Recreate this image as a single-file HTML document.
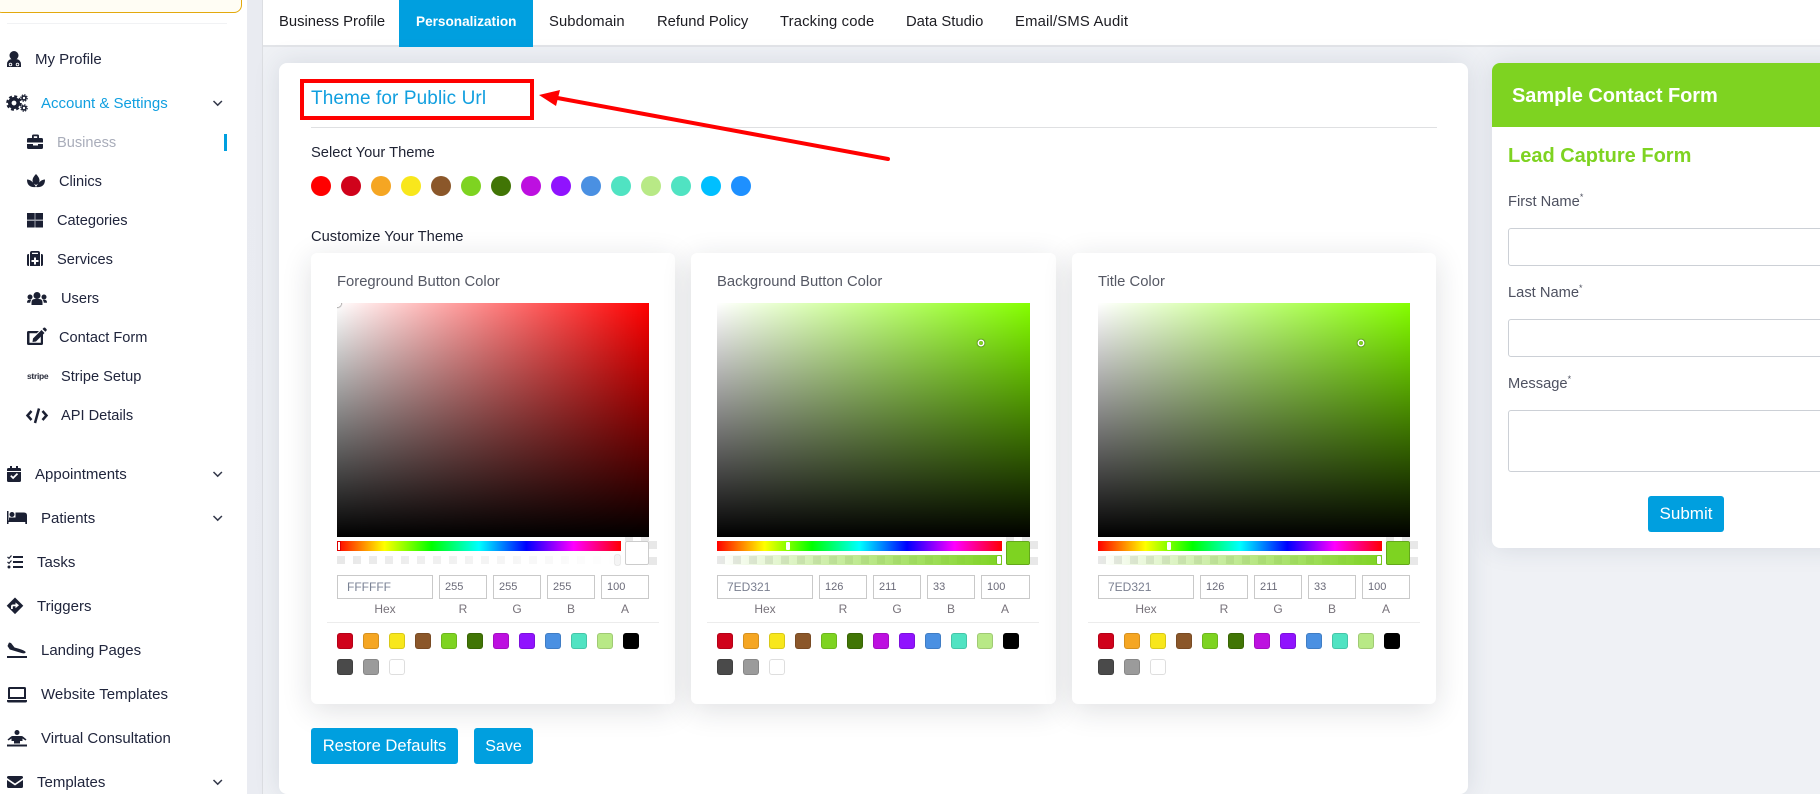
<!DOCTYPE html>
<html lang="en">
<head>
<meta charset="utf-8">
<title>Personalization</title>
<style>
*{box-sizing:border-box}
html,body{margin:0;padding:0;width:1820px;height:794px;overflow:hidden;background:#fff}
body{position:relative;font-family:"Liberation Sans",sans-serif;color:#1f2438}
.a{position:absolute}
.t{position:absolute;white-space:nowrap;line-height:20px}
#side{position:absolute;left:0;top:0;width:247px;height:794px;background:#fff}
#gap{position:absolute;left:247px;top:0;width:16px;height:794px;background:linear-gradient(#e9ebf1,#eaecf2);border-right:1px solid #dcdee2}
#tabs{position:absolute;left:263px;top:0;width:1557px;height:47px;background:#fff;border-bottom:2px solid #e2e4e8}
#content{position:absolute;left:263px;top:47px;width:1557px;height:747px;background:#eff1f5}
.m{font-size:15px;color:#20253c}
.s{font-size:14.600px;color:#20253c}
.tab{position:absolute;top:12px;font-size:14.800px;line-height:20px;color:#1c1c22;white-space:nowrap}
.panel{position:absolute;background:#fff;border-radius:8px;box-shadow:0 0 26px rgba(45,60,90,.13)}
.card{position:absolute;top:253px;height:451px;width:365px;background:#fff;border-radius:6px;box-shadow:0 6px 30px rgba(30,35,50,.14)}
.sat{position:absolute;left:26px;top:50px;width:313px;height:234px;overflow:hidden}
.sat i{position:absolute;inset:0;display:block}
.hue{position:absolute;left:26px;top:288px;width:285px;height:10px;background:linear-gradient(90deg,#f00 0%,#ff0 16.67%,#0f0 33.33%,#0ff 50%,#00f 66.67%,#f0f 83.33%,#f00 100%)}
.alp{position:absolute;left:26px;top:302px;width:285px;height:10px;background-color:#fff;background-image:linear-gradient(90deg,#e8e8e8 50%,#fff 50%);background-size:16px 8px;background-position:0 1px;background-repeat:repeat-x}
.alp i{position:absolute;inset:0;display:block}
.chk{position:absolute;left:314px;top:284px;width:32px;height:28px;background-image:conic-gradient(#fff 25%,#e8e8e8 0 50%,#fff 0 75%,#e8e8e8 0);background-size:16px 16px;background-position:0 -4px}
.sw{position:absolute;left:314px;top:288px;width:24px;height:24px;border-radius:2px;box-shadow:inset 0 0 0 1px rgba(0,0,0,.2)}
.h{position:absolute;width:4px;background:#fff;border-radius:1px}
.dot{position:absolute;width:4px;height:4px;border-radius:50%;box-shadow:0 0 0 1.500px #fff,0 0 1px 2px rgba(0,0,0,.5)}
.in{position:absolute;top:322px;height:24px;border:1px solid #c9c9c9;font-size:11px;line-height:22px;color:#6a6a78;padding-left:5px;background:#fff}
.lb{position:absolute;top:349px;font-size:12px;line-height:14px;color:#77727a;text-align:center}
.dv{position:absolute;left:16px;top:369px;width:332px;height:1px;background:#ececec}
.c{position:absolute;width:16px;height:16px;border-radius:3px;box-shadow:inset 0 0 0 1px rgba(0,0,0,.13)}
.cl{position:absolute;font-size:14.800px;line-height:20px;color:#555864;left:26px;top:19px;white-space:nowrap}
.tc{position:absolute;top:176px;width:20px;height:20px;border-radius:50%}
.fi{position:absolute;left:1508px;width:320px;border:1px solid #ccd0d6;border-radius:3px;background:#fff}
.fl{position:absolute;left:1508px;font-size:14.700px;line-height:20px;color:#4e5160;white-space:nowrap}
.fl sup{font-size:9px;line-height:0}
.btn{position:absolute;background:#009fdf;color:#fff;border-radius:3px;text-align:center;font-size:16.600px;line-height:36px;height:36px;white-space:nowrap}
</style>
</head>
<body>

<div id="side">
  <div class="a" style="left:-6px;top:-12px;width:248px;height:25px;background:#fffdf4;border:1px solid #e3a90c;border-radius:8px"></div>
  <div class="a" style="left:7px;top:23px;width:220px;height:1px;background:#f1f2f4"></div>

  <div class="t m" style="left:35px;top:50px">My Profile</div>
  <div class="t m" style="left:41px;top:94px;color:#109fe0">Account &amp; Settings</div>
  <div class="t s" style="left:57px;top:133px;color:#a9adba">Business</div>
  <div class="a" style="left:224px;top:134px;width:3px;height:17px;background:#009fdf"></div>
  <div class="t s" style="left:59px;top:172px">Clinics</div>
  <div class="t s" style="left:57px;top:211px">Categories</div>
  <div class="t s" style="left:57px;top:250px">Services</div>
  <div class="t s" style="left:61px;top:289px">Users</div>
  <div class="t s" style="left:59px;top:328px">Contact Form</div>
  <div class="t s" style="left:61px;top:367px">Stripe Setup</div>
  <div class="t s" style="left:61px;top:406px">API Details</div>
  <div class="t m" style="left:35px;top:465px">Appointments</div>
  <div class="t m" style="left:41px;top:509px">Patients</div>
  <div class="t m" style="left:37px;top:553px">Tasks</div>
  <div class="t m" style="left:37px;top:597px">Triggers</div>
  <div class="t m" style="left:41px;top:641px">Landing Pages</div>
  <div class="t m" style="left:41px;top:685px;letter-spacing:.05px">Website Templates</div>
  <div class="t m" style="left:41px;top:729px">Virtual Consultation</div>
  <div class="t m" style="left:37px;top:773px">Templates</div>
  <div class="t" style="left:27px;top:366px;font-size:8.500px;font-weight:700;letter-spacing:-.3px;color:#2a2d3c">stripe</div>

  <svg class="a" style="left:0;top:0" width="247" height="794" viewBox="0 0 247 794">
    <g fill="#1b2033">
      <!-- user-md -->
      <circle cx="14" cy="55.500" r="4.500"/>
      <path d="M7 67v-2.500q0-5 5-5.500h4q5 .5 5 5.500V67z"/>
      <circle cx="10.500" cy="64.500" r="1.300" fill="none" stroke="#fff" stroke-width=".9"/>
      <circle cx="17.500" cy="64.500" r="1.300" fill="none" stroke="#fff" stroke-width=".9"/>
      <!-- gears -->
      <circle cx="14" cy="103" r="4.200" fill="none" stroke="#1b2033" stroke-width="3.600"/>
      <circle cx="14" cy="103" r="6.800" fill="none" stroke="#1b2033" stroke-width="2" stroke-dasharray="3 2.340"/>
      <circle cx="24" cy="98" r="2" fill="none" stroke="#1b2033" stroke-width="1.600"/>
      <circle cx="24" cy="98" r="3.300" fill="none" stroke="#1b2033" stroke-width="1" stroke-dasharray="1.500 1.100"/>
      <circle cx="24" cy="108" r="2" fill="none" stroke="#1b2033" stroke-width="1.600"/>
      <circle cx="24" cy="108" r="3.300" fill="none" stroke="#1b2033" stroke-width="1" stroke-dasharray="1.500 1.100"/>
      <!-- briefcase -->
      <path d="M32 138v-2a1.500 1.500 0 0 1 1.500-1.500h4a1.500 1.500 0 0 1 1.500 1.500v2h2.500a1.500 1.500 0 0 1 1.500 1.500v3H27v-3a1.500 1.500 0 0 1 1.500-1.500zM33.800 136.300V138h3.400v-1.700zM27 144h6v1.500h5V144h5v3.500a1.500 1.500 0 0 1-1.500 1.500h-13a1.500 1.500 0 0 1-1.500-1.500z"/>
      <!-- spa -->
      <path d="M36 174q3.500 3.500 3.500 6.500t-3.500 4.500q-3.500-1.500-3.500-4.500T36 174zM27 179.500q5 0 9 7.500q-9 1-9-7.500zM45 179.500q-5 0-9 7.500q9 1 9-7.500z"/>
      <!-- th-large -->
      <rect x="27" y="213" width="16" height="14.500" fill="#9fa2ab"/>
      <rect x="27" y="213" width="7.500" height="6.500"/><rect x="35.500" y="213" width="7.500" height="6.500"/>
      <rect x="27" y="221" width="7.500" height="6.500"/><rect x="35.500" y="221" width="7.500" height="6.500"/>
      <!-- medkit -->
      <path d="M27 255.500q0-1.500 1.500-1.500h.5v12h-.5q-1.500 0-1.500-1.500zM41 254h.5q1.500 0 1.500 1.500v9q0 1.500-1.500 1.500H41z"/>
      <path fill-rule="evenodd" d="M30 266V253q0-2 2-2h6q2 0 2 2v13zM32 254h6v-1.200h-6zM34 257.500v2.500h-2.500v2H34v2.500h2V262h2.500v-2H36v-2.500z"/>
      <!-- users -->
      <circle cx="37" cy="295.500" r="3.500"/><circle cx="30" cy="297" r="2.500"/><circle cx="44" cy="297" r="2.500"/>
      <path d="M31.500 305v-2.500q0-3.500 3.500-3.500h4q3.500 0 3.500 3.500V305zM27 302.500q0-2.800 2.300-2.800h2.200q-1.200 1-1.300 3H27zM47 302.500q0-2.800-2.300-2.800h-2.200q1.200 1 1.300 3H47z"/>
      <!-- edit -->
      <path d="M28.500 331h10.500l-2.200 2.200H29.500v9.600h11.300v-6.600l2.200-2.200v9.500q0 1.500-1.500 1.500H28.500q-1.500 0-1.500-1.500v-11q0-1.500 1.500-1.500z"/>
      <path d="M33 338.500l8.500-8.500 3 3-8.500 8.500-3.500.5zM42.500 329l1.200-1.200q.8-.7 1.500 0l1.300 1.300q.7.700 0 1.500l-1.200 1.200z"/>
      <!-- code -->
      <path d="M31.500 411l-4 4.500 4 4.500M42.500 411l4 4.500-4 4.500M39 408.500l-4 14.500" fill="none" stroke="#1b2033" stroke-width="2.500"/>
      <!-- calendar -->
      <path fill-rule="evenodd" d="M10 466h2v2h4v-2h2v2h1.500q1.500 0 1.500 1.500V471H7v-1.500Q7 468 8.500 468H10zM7 472h14v8.500q0 1.500-1.500 1.500h-11Q7 482 7 480.500zM10.200 476.300l2.900 2.900 5-5-1.200-1.200-3.800 3.800-1.700-1.700z"/>
      <!-- bed -->
      <path d="M7 511h1.500v9.500H27V524h-1.700v-2H8.500v2H7z"/>
      <circle cx="12" cy="514.500" r="2.500"/>
      <path d="M15.500 512.500H24q3 0 3 3v5H15.500z"/>
      <path d="M9 517.500h6.500v3H9z"/>
      <!-- tasks -->
      <path d="M13 556h10v2H13zM13 561h10v2H13zM13 566h10v2H13z"/>
      <path d="M7.500 557l1.500 1.300 2.500-2.800M7.500 562l1.500 1.300 2.500-2.800" fill="none" stroke="#1b2033" stroke-width="1.200"/>
      <circle cx="9" cy="567" r="1.500"/>
      <!-- directions -->
      <path fill-rule="evenodd" d="M15 597.500l8.300 8.300-8.300 8.300-8.300-8.300zM15.500 602.500v2h-2.500q-2 0-2 2v2.500h1.800v-2.500q0-.2.200-.2h2.500v2l3.500-3z"/>
      <!-- plane-arrival -->
      <path d="M7 656h20v2H7zM9 642.500l2 .5 3.500 4.500 4.500 1.200q5 1.400 6.500 3 .5 1-1 1.500-1 .3-3-.2L9.800 649.500 7.500 646z"/>
      <!-- laptop -->
      <path fill-rule="evenodd" d="M9.500 687h15q1.500 0 1.500 1.500V699H8v-10.500Q8 687 9.500 687zM10 689v8h14v-8zM7 700h20v1q0 1.500-1.500 1.500h-17Q7 702.500 7 701z"/>
      <!-- consultation -->
      <circle cx="17" cy="732.500" r="2.500"/>
      <path d="M12.500 736h9q1 0 2 1l3 2.500-1 1-3-2v2.500h-11v-2.500l-3 2-1-1 3-2.500q1-1 2-1z"/>
      <path d="M7 744.500h20v2H7z"/>
      <path d="M14 741h6v2.500h-6z"/>
      <!-- envelope -->
      <path d="M8.500 776h13q1.500 0 1.500 1.500v.5l-8 5.500L7 778v-.5Q7 776 8.500 776zM7 780l8 5.500 8-5.500v6.500q0 1.500-1.500 1.500h-13Q7 788 7 786.500z"/>
    </g>
    <g fill="none" stroke="#33384a" stroke-width="1.500">
      <path d="M213.500 101l4.200 4.200 4.200-4.200"/>
      <path d="M213.500 472l4.200 4.200 4.200-4.200"/>
      <path d="M213.500 516l4.200 4.200 4.200-4.200"/>
      <path d="M213.500 780l4.200 4.200 4.200-4.200"/>
    </g>
  </svg>
</div>

<div id="gap"></div>
<div id="content"></div>

<div id="tabs"></div>
<div class="a" style="left:399px;top:0;width:134px;height:47px;background:#009fdf"></div>
<div class="tab" style="left:279px">Business Profile</div>
<div class="tab" style="left:416px;color:#fff;font-weight:700;font-size:13.600px">Personalization</div>
<div class="tab" style="left:549px;letter-spacing:.1px">Subdomain</div>
<div class="tab" style="left:657px">Refund Policy</div>
<div class="tab" style="left:780px;letter-spacing:.15px">Tracking code</div>
<div class="tab" style="left:906px">Data Studio</div>
<div class="tab" style="left:1015px;letter-spacing:.2px">Email/SMS Audit</div>

<div class="panel" style="left:279px;top:63px;width:1189px;height:731px"></div>
<div class="t" style="left:311px;top:88px;font-size:19px;line-height:22px;color:#119fdf;letter-spacing:.1px">Theme for Public Url</div>
<div class="a" style="left:311px;top:127px;width:1126px;height:1px;background:#dfe0e2"></div>
<div class="t" style="left:311px;top:143px;font-size:14.700px;color:#1e2233">Select Your Theme</div>

<div class="tc" style="left:311px;background:#ff0000"></div>
<div class="tc" style="left:341px;background:#d0021b"></div>
<div class="tc" style="left:371px;background:#f5a623"></div>
<div class="tc" style="left:401px;background:#f8e71c"></div>
<div class="tc" style="left:431px;background:#8b572a"></div>
<div class="tc" style="left:461px;background:#7ed321"></div>
<div class="tc" style="left:491px;background:#417505"></div>
<div class="tc" style="left:521px;background:#bd10e0"></div>
<div class="tc" style="left:551px;background:#9013fe"></div>
<div class="tc" style="left:581px;background:#4a90e2"></div>
<div class="tc" style="left:611px;background:#50e3c2"></div>
<div class="tc" style="left:641px;background:#b8e986"></div>
<div class="tc" style="left:671px;background:#50e3c2"></div>
<div class="tc" style="left:701px;background:#00bfff"></div>
<div class="tc" style="left:731px;background:#1e90ff"></div>

<div class="t" style="left:311px;top:227px;font-size:14.700px;color:#1e2233">Customize Your Theme</div>

<!-- Card 1 -->
<div class="card" style="left:311px;width:364px">
  <div class="cl">Foreground Button Color</div>
  <div class="sat" style="background:#f00;width:312px">
    <i style="background:linear-gradient(90deg,#fff,rgba(255,255,255,0))"></i>
    <i style="background:linear-gradient(0deg,#000,rgba(0,0,0,0))"></i>
    <i style="left:-3px;top:-3px;right:auto;bottom:auto;width:7px;height:7px;border-radius:50%;border:1.500px solid #fff;box-shadow:0 0 1px 1px rgba(0,0,0,.35)"></i>
  </div>
  <div class="hue" style="width:284px"></div>
  <div class="h" style="left:26px;top:288px;height:10px;border:1px solid #d00;width:4px"></div>
  <div class="alp" style="width:284px"><i style="background:linear-gradient(90deg,rgba(255,255,255,0),#fff)"></i></div>
  <div class="h" style="left:304px;top:302px;height:10px;width:5px;background:#f4f4f4;box-shadow:0 0 1px rgba(0,0,0,.5)"></div>
  <div class="chk"></div>
  <div class="sw" style="background:#fff"></div>
  <div class="in" style="left:26px;width:96px;padding-left:9px;color:#7a8294;font-size:12px">FFFFFF</div>
  <div class="in" style="left:128px;width:48px">255</div>
  <div class="in" style="left:182px;width:48px">255</div>
  <div class="in" style="left:236px;width:48px">255</div>
  <div class="in" style="left:290px;width:48px">100</div>
  <div class="lb" style="left:26px;width:96px">Hex</div>
  <div class="lb" style="left:128px;width:48px">R</div>
  <div class="lb" style="left:182px;width:48px">G</div>
  <div class="lb" style="left:236px;width:48px">B</div>
  <div class="lb" style="left:290px;width:48px">A</div>
  <div class="dv"></div>
  <div class="c" style="left:26px;top:380px;background:#d0021b"></div>
  <div class="c" style="left:52px;top:380px;background:#f5a623"></div>
  <div class="c" style="left:78px;top:380px;background:#f8e71c"></div>
  <div class="c" style="left:104px;top:380px;background:#8b572a"></div>
  <div class="c" style="left:130px;top:380px;background:#7ed321"></div>
  <div class="c" style="left:156px;top:380px;background:#417505"></div>
  <div class="c" style="left:182px;top:380px;background:#bd10e0"></div>
  <div class="c" style="left:208px;top:380px;background:#9013fe"></div>
  <div class="c" style="left:234px;top:380px;background:#4a90e2"></div>
  <div class="c" style="left:260px;top:380px;background:#50e3c2"></div>
  <div class="c" style="left:286px;top:380px;background:#b8e986"></div>
  <div class="c" style="left:312px;top:380px;background:#000"></div>
  <div class="c" style="left:26px;top:406px;background:#4a4a4a"></div>
  <div class="c" style="left:52px;top:406px;background:#9b9b9b"></div>
  <div class="c" style="left:78px;top:406px;background:#fff"></div>
</div>

<!-- Card 2 -->
<div class="card" style="left:691px">
  <div class="cl">Background Button Color</div>
  <div class="sat" style="background:#85ff00">
    <i style="background:linear-gradient(90deg,#fff,rgba(255,255,255,0))"></i>
    <i style="background:linear-gradient(0deg,#000,rgba(0,0,0,0))"></i>
  </div>
  <div class="dot" style="left:288px;top:88px"></div>
  <div class="hue"></div>
  <div class="h" style="left:95px;top:289px;height:8px"></div>
  <div class="alp"><i style="background:linear-gradient(90deg,rgba(126,211,33,0),#7ed321)"></i></div>
  <div class="h" style="left:306px;top:303px;height:8px;box-shadow:0 0 1px rgba(0,0,0,.5)"></div>
  <div class="chk" style="left:315px"></div>
  <div class="sw" style="left:315px;background:#7ed321"></div>
  <div class="in" style="left:26px;width:96px;padding-left:9px;font-size:12px;color:#7a7f90">7ED321</div>
  <div class="in" style="left:128px;width:48px">126</div>
  <div class="in" style="left:182px;width:48px">211</div>
  <div class="in" style="left:236px;width:48px">33</div>
  <div class="in" style="left:290px;width:49px">100</div>
  <div class="lb" style="left:26px;width:96px">Hex</div>
  <div class="lb" style="left:128px;width:48px">R</div>
  <div class="lb" style="left:182px;width:48px">G</div>
  <div class="lb" style="left:236px;width:48px">B</div>
  <div class="lb" style="left:290px;width:48px">A</div>
  <div class="dv"></div>
  <div class="c" style="left:26px;top:380px;background:#d0021b"></div>
  <div class="c" style="left:52px;top:380px;background:#f5a623"></div>
  <div class="c" style="left:78px;top:380px;background:#f8e71c"></div>
  <div class="c" style="left:104px;top:380px;background:#8b572a"></div>
  <div class="c" style="left:130px;top:380px;background:#7ed321"></div>
  <div class="c" style="left:156px;top:380px;background:#417505"></div>
  <div class="c" style="left:182px;top:380px;background:#bd10e0"></div>
  <div class="c" style="left:208px;top:380px;background:#9013fe"></div>
  <div class="c" style="left:234px;top:380px;background:#4a90e2"></div>
  <div class="c" style="left:260px;top:380px;background:#50e3c2"></div>
  <div class="c" style="left:286px;top:380px;background:#b8e986"></div>
  <div class="c" style="left:312px;top:380px;background:#000"></div>
  <div class="c" style="left:26px;top:406px;background:#4a4a4a"></div>
  <div class="c" style="left:52px;top:406px;background:#9b9b9b"></div>
  <div class="c" style="left:78px;top:406px;background:#fff"></div>
</div>

<!-- Card 3 -->
<div class="card" style="left:1072px;width:364px">
  <div class="cl">Title Color</div>
  <div class="sat" style="background:#85ff00;width:312px">
    <i style="background:linear-gradient(90deg,#fff,rgba(255,255,255,0))"></i>
    <i style="background:linear-gradient(0deg,#000,rgba(0,0,0,0))"></i>
  </div>
  <div class="dot" style="left:287px;top:88px"></div>
  <div class="hue" style="width:284px"></div>
  <div class="h" style="left:95px;top:289px;height:8px"></div>
  <div class="alp" style="width:284px"><i style="background:linear-gradient(90deg,rgba(126,211,33,0),#7ed321)"></i></div>
  <div class="h" style="left:305px;top:303px;height:8px;box-shadow:0 0 1px rgba(0,0,0,.5)"></div>
  <div class="chk"></div>
  <div class="sw" style="background:#7ed321"></div>
  <div class="in" style="left:26px;width:96px;padding-left:9px;font-size:12px;color:#7a7f90">7ED321</div>
  <div class="in" style="left:128px;width:48px">126</div>
  <div class="in" style="left:182px;width:48px">211</div>
  <div class="in" style="left:236px;width:48px">33</div>
  <div class="in" style="left:290px;width:48px">100</div>
  <div class="lb" style="left:26px;width:96px">Hex</div>
  <div class="lb" style="left:128px;width:48px">R</div>
  <div class="lb" style="left:182px;width:48px">G</div>
  <div class="lb" style="left:236px;width:48px">B</div>
  <div class="lb" style="left:290px;width:48px">A</div>
  <div class="dv"></div>
  <div class="c" style="left:26px;top:380px;background:#d0021b"></div>
  <div class="c" style="left:52px;top:380px;background:#f5a623"></div>
  <div class="c" style="left:78px;top:380px;background:#f8e71c"></div>
  <div class="c" style="left:104px;top:380px;background:#8b572a"></div>
  <div class="c" style="left:130px;top:380px;background:#7ed321"></div>
  <div class="c" style="left:156px;top:380px;background:#417505"></div>
  <div class="c" style="left:182px;top:380px;background:#bd10e0"></div>
  <div class="c" style="left:208px;top:380px;background:#9013fe"></div>
  <div class="c" style="left:234px;top:380px;background:#4a90e2"></div>
  <div class="c" style="left:260px;top:380px;background:#50e3c2"></div>
  <div class="c" style="left:286px;top:380px;background:#b8e986"></div>
  <div class="c" style="left:312px;top:380px;background:#000"></div>
  <div class="c" style="left:26px;top:406px;background:#4a4a4a"></div>
  <div class="c" style="left:52px;top:406px;background:#9b9b9b"></div>
  <div class="c" style="left:78px;top:406px;background:#fff"></div>
</div>

<div class="btn" style="left:311px;top:728px;width:147px">Restore Defaults</div>
<div class="btn" style="left:474px;top:728px;width:59px;font-size:16px;line-height:37px">Save</div>

<!-- Right card -->
<div class="panel" style="left:1492px;top:63px;width:360px;height:485px"></div>
<div class="a" style="left:1492px;top:63px;width:328px;height:64px;background:#7ed321;border-radius:8px 0 0 0"></div>
<div class="t" style="left:1512px;top:85px;font-size:20px;line-height:22px;color:#fff;font-weight:700;letter-spacing:-.05px">Sample Contact Form</div>
<div class="t" style="left:1508px;top:145px;font-size:20px;line-height:22px;color:#7ed321;font-weight:700">Lead Capture Form</div>
<div class="fl" style="top:192px">First Name<sup>*</sup></div>
<div class="fi" style="top:228px;height:38px"></div>
<div class="fl" style="top:283px">Last Name<sup>*</sup></div>
<div class="fi" style="top:319px;height:38px"></div>
<div class="fl" style="top:374px">Message<sup>*</sup></div>
<div class="fi" style="top:410px;height:62px"></div>
<div class="btn" style="left:1648px;top:496px;width:76px;height:36px;line-height:35px;font-size:17px">Submit</div>

<!-- Annotation -->
<svg class="a" style="left:0;top:0" width="1820" height="794" viewBox="0 0 1820 794">
  <rect x="302" y="81" width="230" height="37" fill="none" stroke="#ff0000" stroke-width="4"/>
  <path d="M888 159L552 97" stroke="#ff0000" stroke-width="4" fill="none" stroke-linecap="round"/>
  <path d="M539 95L560 90L556 106z" fill="#ff0000"/>
</svg>

</body>
</html>
